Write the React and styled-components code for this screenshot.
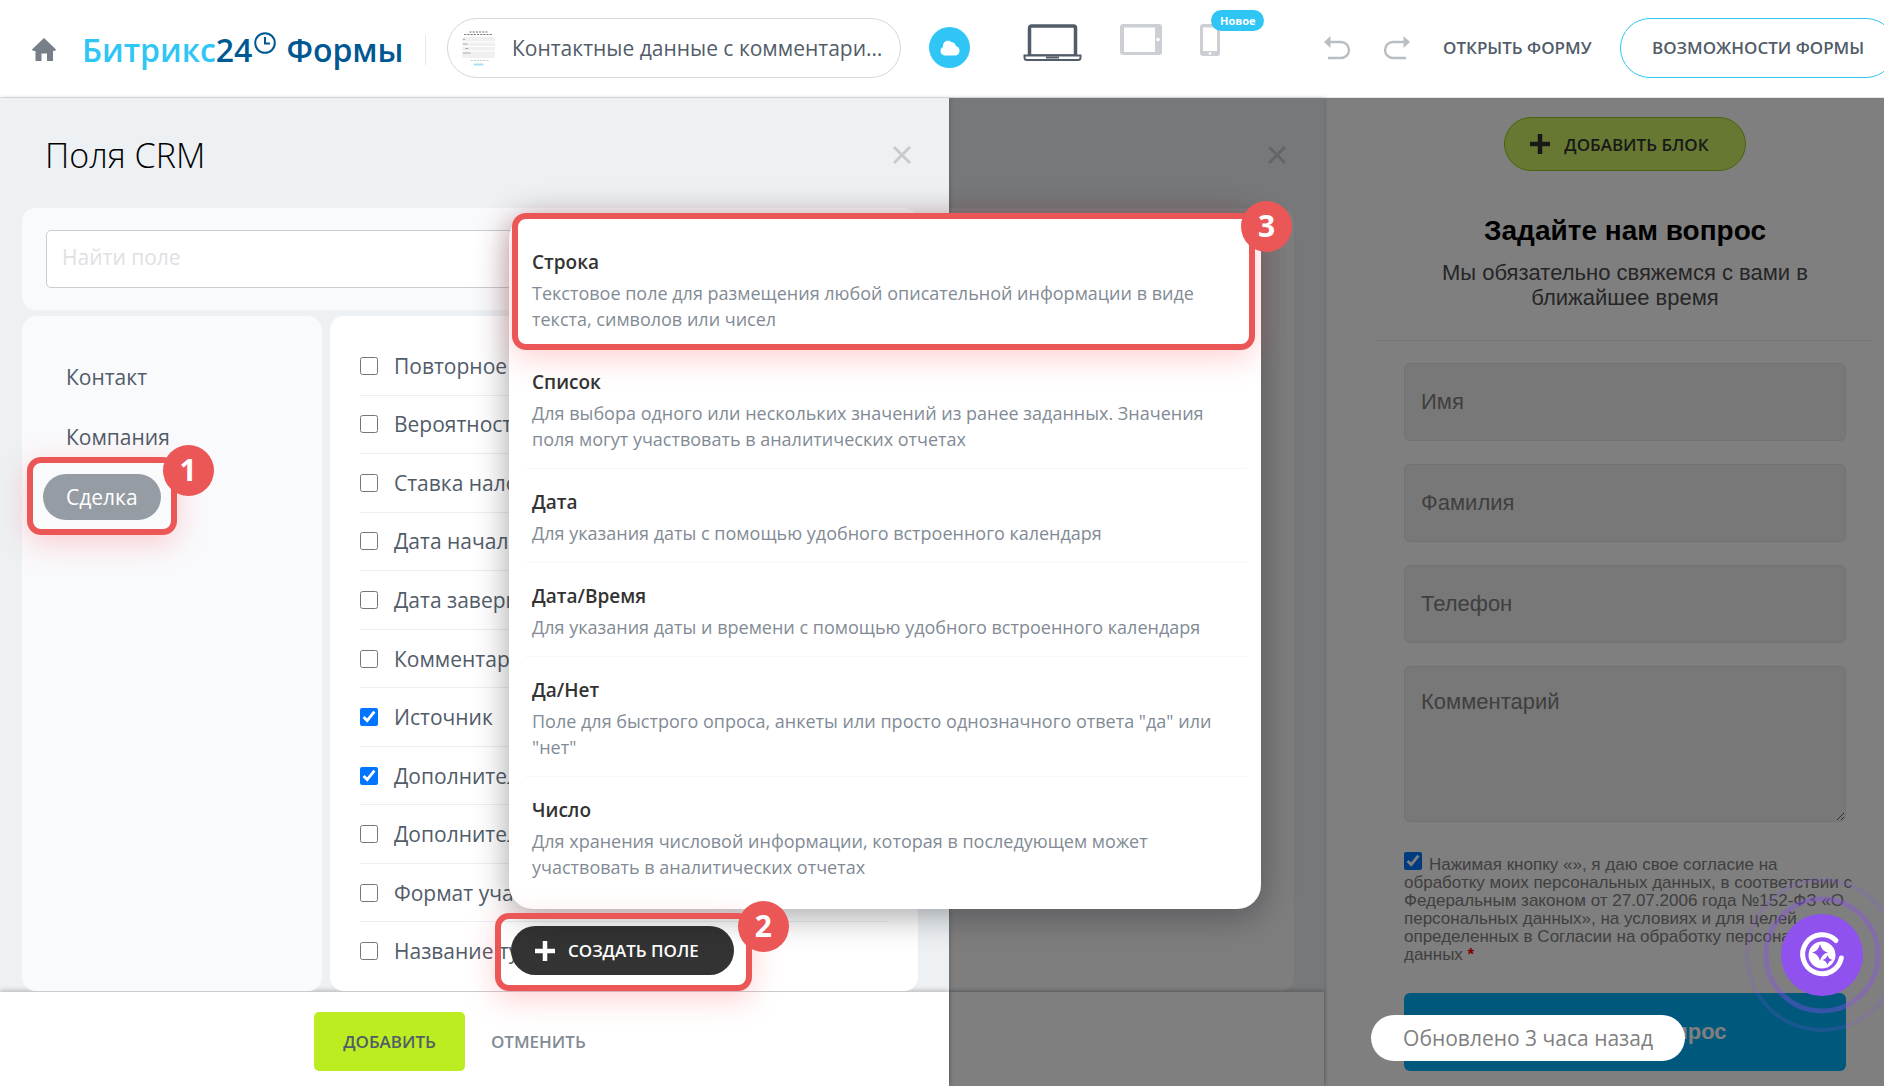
import React, { useState } from 'react'
import styled, { createGlobalStyle } from 'styled-components'

const GlobalStyle = createGlobalStyle`
    * {
        box-sizing: border-box;
    }
    body {
        margin: 0;
        font-family: "Open Sans", "Noto Sans", sans-serif;
        color: #525c69;
    }
    button, input, textarea {
        font-family: inherit;
        margin: 0;
    }
    button {
        border: none;
        background: none;
        padding: 0;
        cursor: pointer;
    }
`
const Page = styled.div`
    min-height: 100vh;
    display: flex;
    flex-direction: column;
    overflow: hidden;
`

/* header */
const Header = styled.header`
    height: 98px;
    flex-shrink: 0;
    display: flex;
    align-items: center;
    padding: 0 0 16px 32px;
    background-color: #fff;
    border-bottom: 1px solid #e4e7ea;
    white-space: nowrap;
    > * {
        flex-shrink: 0;
    }
`
const IconButton = styled.button`
    display: flex;
    position: relative;
`
const HomeButton = styled(IconButton)`
    margin-top: 18px;
`
const Logo = styled.a`
    display: flex;
    align-items: center;
    margin-left: 26px;
    padding-top: 18px;
    width: 343px;
    font-size: 32px;
    line-height: 32px;
    font-weight: 600;
    color: #005893;
    text-decoration: none;
    svg {
        margin: 0 10px 14px 2px;
    }
`
const LogoBrand = styled.span`
    color: #2fc6f6;
`
const Divider = styled.span`
    width: 1px;
    height: 30px;
    margin-top: 18px;
    background-color: #e6e8ea;
`
const FormName = styled.button`
    display: flex;
    align-items: center;
    width: 454px;
    height: 60px;
    margin: 14px 28px 0 21px;
    padding: 0 14px;
    border: 1px solid #d5d7da;
    border-radius: 30px;
    font-size: 21px;
    color: #525c69;
    svg {
        flex-shrink: 0;
        margin-right: 17px;
    }
`
const Ellipsis = styled.span`
    overflow: hidden;
    text-overflow: ellipsis;
`
const CloudButton = styled(IconButton)`
    width: 41px;
    height: 41px;
    margin-top: 14px;
    border-radius: 50%;
    align-items: center;
    justify-content: center;
    background-color: #2fc6f6;
`
const Devices = styled.div`
    display: flex;
    align-items: flex-start;
    gap: 38px;
    margin-left: 53px;
    padding-top: 4px;
`
const NewBadge = styled.span`
    position: absolute;
    left: 11px;
    top: -14px;
    height: 21px;
    padding: 0 9px;
    border-radius: 11px;
    background-color: #2fc6f6;
    color: #fff;
    font-size: 11px;
    line-height: 21px;
    font-weight: 700;
`
const History = styled.div`
    display: flex;
    gap: 32px;
    margin: 14px 33px 0 104px;
`
const OpenLink = styled.a`
    width: 177px;
    margin-top: 14px;
    font-size: 17px;
    font-weight: 600;
    color: #525c69;
    text-decoration: none;
`
const FeaturesButton = styled.button`
    height: 60px;
    margin-top: 14px;
    padding: 0 31px;
    border: 1px solid #2fc6f6;
    border-radius: 30px;
    font-size: 17px;
    font-weight: 600;
    color: #525c69;
`

/* workspace */
const Workspace = styled.main`
    flex: 1;
    display: grid;
    grid-template-columns: 949fr 375fr 560fr;
    position: relative;
`
const Shade = styled.div`
    position: absolute;
    inset: 0;
    z-index: 1;
    background-color: rgba(0, 0, 0, 0.5);
`
const Slider = styled.section`
    display: flex;
    flex-direction: column;
    position: relative;
    z-index: 2;
    background-color: #edf1f4;
    box-shadow: 1px 0 4px rgba(0, 0, 0, 0.2);
`
const SliderHead = styled.div`
    display: flex;
    justify-content: space-between;
    align-items: center;
    height: 110px;
    padding: 4px 37px 0 45px;
`
const SliderTitle = styled.h1`
    margin: 0;
    font-size: 34px;
    font-weight: 300;
    color: #000;
`
const SliderBody = styled.div`
    flex: 1;
    display: flex;
    flex-direction: column;
    gap: 6px;
    padding: 0 31px 1px 22px;
`
const SearchCard = styled.div`
    height: 102px;
    padding: 22px 24px;
    border-radius: 14px;
    background-color: #f9fafc;
`
const SearchInput = styled.input`
    width: 100%;
    height: 58px;
    padding: 0 15px 4px;
    border: 1px solid #c6cdd3;
    border-radius: 5px;
    font-size: 21px;
    outline: none;
    &::placeholder {
        color: #dfe0e3;
    }
`
const Columns = styled.div`
    flex: 1;
    display: flex;
    gap: 8px;
    position: relative;
`
const Menu = styled.nav`
    width: 300px;
    display: flex;
    flex-direction: column;
    align-items: flex-start;
    gap: 14px;
    padding: 38px 21px;
    border-radius: 14px;
    background-color: #f9fafc;
`
const MenuItem = styled.button`
    position: relative;
    height: 46px;
    padding: 0 23px;
    border-radius: 23px;
    font-size: 21px;
    color: ${props => props.$active ? '#fff' : '#525c69'};
    background-color: ${props => props.$active ? '#959ca4' : 'transparent'};
`
const Fields = styled.div`
    flex: 1;
    display: flex;
    flex-direction: column;
    padding: 21px 30px 11px;
    border-radius: 14px;
    background-color: #fff;
`
const Field = styled.label`
    flex: 1;
    display: flex;
    align-items: center;
    gap: 16px;
    border-bottom: 1px solid #edeef0;
    font-size: 21px;
    line-height: 28px;
    white-space: nowrap;
    &:last-child {
        border-bottom: none;
    }
`
const Check = styled.input`
    flex-shrink: 0;
    width: 18px;
    height: 18px;
    accent-color: #0075ff;
`
const Footer = styled.footer`
    display: flex;
    align-items: center;
    justify-content: center;
    height: 94px;
    padding: 4px 23px 0 0;
    background-color: #fff;
    box-shadow: 0 -2px 4px rgba(0, 0, 0, 0.2);
`
const FooterButton = styled.button`
    height: 59px;
    padding: 0 ${props => props.$primary ? '29px' : '26px'};
    border-radius: 5px;
    font-size: 17px;
    font-weight: 600;
    color: ${props => props.$primary ? '#535c69' : '#828b95'};
    background-color: ${props => props.$primary ? '#bbed21' : 'transparent'};
`

/* numbered callouts */
const Highlight = styled.span`
    position: absolute;
    inset: ${props => props.$inset};
    border: 6px solid #eb5757;
    border-radius: 14px;
    box-shadow: 0 8px 30px rgba(255, 70, 80, 0.25);
    pointer-events: none;
`
const Step = styled.span`
    position: absolute;
    top: -18px;
    right: -43px;
    width: 51px;
    height: 51px;
    border-radius: 50%;
    background-color: #eb5757;
    color: #fff;
    font-size: 30px;
    line-height: 50px;
    font-weight: 700;
    text-align: center;
`

/* create field */
const CreateBox = styled.div`
    position: absolute;
    left: 489px;
    bottom: 16px;
`
const CreateButton = styled.button`
    display: flex;
    align-items: center;
    gap: 13px;
    height: 49px;
    padding: 0 35px 0 24px;
    border-radius: 25px;
    background-color: #333;
    color: #fff;
    font-size: 17px;
    font-weight: 600;
    white-space: nowrap;
`
const Popup = styled.div`
    position: absolute;
    left: -2px;
    bottom: 66px;
    width: 752px;
    padding: 15px 14px 13px 16px;
    border-radius: 24px;
    background-color: #fff;
    box-shadow: 0 7px 21px rgba(83, 92, 105, 0.12), 0 6px 36px rgba(0, 0, 0, 0.3);
`
const TypeItem = styled.button`
    display: block;
    position: relative;
    width: 100%;
    padding: 19px 7px 16px;
    border-bottom: 1px solid #f7f8f8;
    text-align: left;
    &:last-of-type {
        border-bottom: none;
    }
`
const TypeTitle = styled.span`
    display: block;
    margin-bottom: 4px;
    font-size: 19px;
    line-height: 28px;
    font-weight: 600;
    color: #333;
`
const TypeText = styled.span`
    display: block;
    font-size: 18px;
    line-height: 26px;
    color: #828b95;
`

/* panel under the shade */
const BackPanel = styled.section`
    display: flex;
    flex-direction: column;
    position: relative;
    background-color: #eef0f4;
    box-shadow: 1px 0 4px rgba(0, 0, 0, 0.2);
`
const BackCard = styled.div`
    flex: 1;
    margin: 0 30px 1px 0;
    border-radius: 0 14px 14px 0;
    background-color: #fdfdfe;
`

/* form preview */
const Preview = styled.section`
    display: flex;
    flex-direction: column;
    align-items: stretch;
    padding: 19px 11px 14px 53px;
    background-color: #fff;
    font-family: "Liberation Sans", Arial, sans-serif;
`
const AddBlock = styled.button`
    align-self: center;
    display: flex;
    align-items: center;
    gap: 14px;
    height: 54px;
    padding: 0 36px 0 25px;
    border: 1px solid #94c820;
    border-radius: 27px;
    background-color: #ccf062;
    color: #333;
    font-family: "Open Sans", "Noto Sans", sans-serif;
    font-size: 17px;
    font-weight: 600;
`
const FormHead = styled.div`
    padding: 44px 25px 30px;
    border-bottom: 1px solid #e8eaec;
    text-align: center;
`
const FormTitle = styled.h2`
    margin: 0 0 13px;
    font-size: 28px;
    line-height: 32px;
    color: #000;
`
const FormText = styled.p`
    margin: 0;
    padding: 0 25px;
    font-size: 22px;
    line-height: 25px;
    color: #4c4c4c;
`
const Form = styled.form`
    display: flex;
    flex-direction: column;
    gap: 23px;
    padding: 22px 27px 0;
`
const Input = styled.input`
    height: 78px;
    padding: 0 16px;
    border: 1px solid #e4e4e4;
    border-radius: 6px;
    background-color: #f0f0f0;
    font-size: 22px;
    &::placeholder {
        color: #7f7f7f;
    }
`
const TextArea = styled(Input).attrs({ as: 'textarea' })`
    height: 156px;
    padding: 22px 16px;
`
const Consent = styled.label`
    margin-right: -14px;
    padding-top: 7px;
    font-size: 17px;
    line-height: 18px;
    color: #808080;
    input {
        margin-right: 7px;
    }
`
const Required = styled.b`
    color: #f00;
`
const Submit = styled.button`
    height: 78px;
    margin-top: 6px;
    border-radius: 6px;
    background-color: #00b0f8;
    color: #fff;
    font-size: 22px;
    font-weight: 700;
`
const Toast = styled.div`
    position: absolute;
    z-index: 3;
    right: 199px;
    bottom: 25px;
    padding: 0 32px;
    border-radius: 23px;
    background-color: #fff;
    color: #808080;
    font-size: 21px;
    line-height: 46px;
`
const Assistant = styled(IconButton)`
    position: absolute;
    z-index: 3;
    right: -16px;
    bottom: 53px;
`

const HomeIcon = () => (
    <svg width="24" height="23" viewBox="0 0 24 23" fill="#777f89">
        <path d="M12 0 24 11.5q-.6 1.4-2 1.4h-1V23h-6v-7.500H9.500V23H3.500V12.900H2q-1.500 0-2-1.400Z" />
    </svg>
)
const ClockIcon = () => (
    <svg width="22" height="22" viewBox="0 0 22 22" fill="none" stroke="#005893" strokeWidth="2">
        <circle cx="11" cy="11" r="9.800" />
        <path d="M11 5v6.500h5" />
    </svg>
)
const ThumbIcon = () => (
    <svg width="33" height="36" viewBox="0 0 31 36" preserveAspectRatio="none">
        <path d="M7 2h17M2 4.500h27" stroke="#777" strokeDasharray="2 1" />
        <rect y="7" width="31" height="21" rx="2" fill="#f0f0f0" />
        <path d="M0 12h31M0 16.500h31M0 21h31" stroke="#fff" />
        <path d="M1 9.500h2M1 14h4M3 18.500h3M1 23h7" stroke="#aaa" />
        <path d="M8 30.500h18" stroke="#ccc" strokeDasharray="2 1" />
        <path d="M11 34.500h9" stroke="#a8def5" strokeWidth="2" />
    </svg>
)
const CloudIcon = () => (
    <svg width="20" height="16" viewBox="0 0 20 16" fill="#fff">
        <path d="M4.500 15.500a4.500 4.500 0 0 1-1.500-8.500C2.500 3.500 5 .8 8 .8c1.500 0 2.500.5 3.500 1.500 2.500 0 4.300 1.700 4.500 4a4.700 4.700 0 0 1-.5 9.200Z" />
    </svg>
)
const LaptopIcon = () => (
    <svg width="59" height="38" viewBox="0 0 59 38">
        <rect x="6.500" y="2" width="46" height="30" rx="2" fill="none" stroke="#525c69" strokeWidth="3.500" />
        <path d="M1.500 31.500h56v2q0 2.500-2.500 2.500H4q-2.500 0-2.500-2.500Z" fill="#fff" stroke="#525c69" strokeWidth="2" />
        <path d="M23 33.500h13" stroke="#525c69" strokeWidth="2" />
    </svg>
)
const TabletIcon = () => (
    <svg width="42" height="31" viewBox="0 0 42 31">
        <path fillRule="evenodd" d="M3 0h36q3 0 3 3v25q0 3-3 3H3q-3 0-3-3V3q0-3 3-3Zm1 3.500v24.500h31V3.500Z" fill="#ccd0d4" />
        <circle cx="38" cy="15.500" r="1.800" fill="#fff" />
    </svg>
)
const PhoneIcon = () => (
    <svg width="20" height="32" viewBox="0 0 20 32">
        <path fillRule="evenodd" d="M3 0h14q3 0 3 3v26q0 3-3 3H3q-3 0-3-3V3q0-3 3-3Zm0 3.500v23.500h14V3.500Z" fill="#ccd0d4" />
        <circle cx="10" cy="29.500" r="1.300" fill="#fff" />
    </svg>
)
const UndoIcon = ({ flip }) => (
    <svg width="27" height="24" viewBox="0 0 27 24" transform={flip ? 'scale(-1 1)' : undefined}>
        <path d="M4 6h13a8 8 0 0 1 0 16H4" fill="none" stroke="#b9bec4" strokeWidth="2.400" />
        <path d="M0 6 6.500 0v12Z" fill="#b9bec4" />
    </svg>
)
const CloseIcon = () => (
    <svg width="20" height="20" viewBox="0 0 20 20" stroke="#c8cbce" strokeWidth="3">
        <path d="m2 2 16 16M18 2 2 18" />
    </svg>
)
const PlusIcon = ({ color }) => (
    <svg width="20" height="20" viewBox="0 0 20 20" stroke={color} strokeWidth="4.500">
        <path d="M10 0v20M0 10h20" />
    </svg>
)
const AssistantIcon = () => (
    <svg width="156" height="156" viewBox="0 0 156 156" fill="none">
        <circle cx="78" cy="78" r="75" stroke="#8b52ee" strokeOpacity=".18" strokeWidth="4" />
        <circle cx="78" cy="78" r="56" stroke="#8b52ee" strokeOpacity=".38" strokeWidth="5" />
        <circle cx="78" cy="78" r="41" fill="#8f52ee" />
        <path d="M92 63.500A19.500 19.500 0 1 0 97.300 81" stroke="#fff" strokeWidth="5" strokeLinecap="round" />
        <circle cx="78" cy="78" r="13.500" fill="#fff" />
        <path d="M76 67q1.500 7 8 8.500-6.500 1.500-8 8.500-1.500-7-8-8.500 6.500-1.500 8-8.500Z" fill="#8f52ee" />
        <path d="M83.500 78q1 4 5 5-4 1-5 5-1-4-5-5 4-1 5-5Z" fill="#8f52ee" />
    </svg>
)

const menuItems = ['Контакт', 'Компания', 'Сделка']

const fieldItems = [
    { id: 1, name: 'Повторное' },
    { id: 2, name: 'Вероятность' },
    { id: 3, name: 'Ставка налога' },
    { id: 4, name: 'Дата начала' },
    { id: 5, name: 'Дата завершения' },
    { id: 6, name: 'Комментарий' },
    { id: 7, name: 'Источник', checked: true },
    { id: 8, name: 'Дополнительно', checked: true },
    { id: 9, name: 'Дополнительно' },
    { id: 10, name: 'Формат участия' },
    { id: 11, name: 'Название тура' },
]

const typeItems = [
    { title: 'Строка', text: 'Текстовое поле для размещения любой описательной информации в виде текста, символов или чисел', step: 3 },
    { title: 'Список', text: 'Для выбора одного или нескольких значений из ранее заданных. Значения поля могут участвовать в аналитических отчетах' },
    { title: 'Дата', text: 'Для указания даты с помощью удобного встроенного календаря' },
    { title: 'Дата/Время', text: 'Для указания даты и времени с помощью удобного встроенного календаря' },
    { title: 'Да/Нет', text: 'Поле для быстрого опроса, анкеты или просто однозначного ответа "да" или "нет"' },
    { title: 'Число', text: 'Для хранения числовой информации, которая в последующем может участвовать в аналитических отчетах' },
]

const TopBar = () => (
    <Header>
        <HomeButton aria-label="Главная"><HomeIcon /></HomeButton>
        <Logo href="#">
            <LogoBrand>Битрикс</LogoBrand>24<ClockIcon />Формы
        </Logo>
        <Divider />
        <FormName>
            <ThumbIcon />
            <Ellipsis>Контактные данные с комментарием</Ellipsis>
        </FormName>
        <CloudButton aria-label="Облако"><CloudIcon /></CloudButton>
        <Devices>
            <IconButton aria-label="Компьютер"><LaptopIcon /></IconButton>
            <IconButton aria-label="Планшет"><TabletIcon /></IconButton>
            <IconButton aria-label="Телефон">
                <PhoneIcon />
                <NewBadge>Новое</NewBadge>
            </IconButton>
        </Devices>
        <History>
            <IconButton aria-label="Отменить действие"><UndoIcon /></IconButton>
            <IconButton aria-label="Повторить действие"><UndoIcon flip /></IconButton>
        </History>
        <OpenLink href="#">ОТКРЫТЬ ФОРМУ</OpenLink>
        <FeaturesButton>ВОЗМОЖНОСТИ ФОРМЫ</FeaturesButton>
    </Header>
)

const CreateField = () => (
    <CreateBox>
        <CreateButton>
            <PlusIcon color="#fff" />
            СОЗДАТЬ ПОЛЕ
        </CreateButton>
        <Popup>
            {typeItems.map(item => (
                <TypeItem key={item.title}>
                    <TypeTitle>{item.title}</TypeTitle>
                    <TypeText>{item.text}</TypeText>
                    {item.step && (
                        <Highlight $inset="-16px -8px -2px -13px">
                            <Step>{item.step}</Step>
                        </Highlight>
                    )}
                </TypeItem>
            ))}
        </Popup>
        <Highlight $inset="-13px -18px -16px -16px">
            <Step>2</Step>
        </Highlight>
    </CreateBox>
)

const CrmFields = () => {
    const [active, setActive] = useState('Сделка')
    return (
        <Slider>
            <SliderHead>
                <SliderTitle>Поля CRM</SliderTitle>
                <IconButton aria-label="Закрыть"><CloseIcon /></IconButton>
            </SliderHead>
            <SliderBody>
                <SearchCard>
                    <SearchInput type="text" placeholder="Найти поле" aria-label="Найти поле" />
                </SearchCard>
                <Columns>
                    <Menu>
                        {menuItems.map(item => (
                            <MenuItem key={item} $active={item === active} onClick={() => setActive(item)}>
                                {item}
                                {item === active && (
                                    <Highlight $inset="-17px -16px -15px">
                                        <Step>1</Step>
                                    </Highlight>
                                )}
                            </MenuItem>
                        ))}
                    </Menu>
                    <Fields>
                        {fieldItems.map(item => (
                            <Field key={item.id}>
                                <Check type="checkbox" defaultChecked={item.checked} />
                                {item.name}
                            </Field>
                        ))}
                    </Fields>
                    <CreateField />
                </Columns>
            </SliderBody>
            <Footer>
                <FooterButton $primary>ДОБАВИТЬ</FooterButton>
                <FooterButton>ОТМЕНИТЬ</FooterButton>
            </Footer>
        </Slider>
    )
}

const FormPreview = () => (
    <Preview>
        <AddBlock>
            <PlusIcon color="#333" />
            ДОБАВИТЬ БЛОК
        </AddBlock>
        <FormHead>
            <FormTitle>Задайте нам вопрос</FormTitle>
            <FormText>Мы обязательно свяжемся с вами в ближайшее время</FormText>
        </FormHead>
        <Form onSubmit={(e) => e.preventDefault()}>
            <Input type="text" placeholder="Имя" aria-label="Имя" />
            <Input type="text" placeholder="Фамилия" aria-label="Фамилия" />
            <Input type="tel" placeholder="Телефон" aria-label="Телефон" />
            <TextArea placeholder="Комментарий" aria-label="Комментарий" />
            <Consent>
                <Check type="checkbox" defaultChecked />
                Нажимая кнопку «», я даю свое согласие на обработку моих персональных данных, в соответствии с
                Федеральным законом от 27.07.2006 года №152-ФЗ «О персональных данных», на условиях и для целей,
                определенных в Согласии на обработку персональных данных <Required>*</Required>
            </Consent>
            <Submit>Отправить вопрос</Submit>
        </Form>
    </Preview>
)

const App = () => {
    return (
        <Page>
            <GlobalStyle />
            <TopBar />
            <Workspace>
                <CrmFields />
                <BackPanel>
                    <SliderHead>
                        <span />
                        <IconButton aria-label="Закрыть панель"><CloseIcon /></IconButton>
                    </SliderHead>
                    <BackCard />
                    <Footer />
                </BackPanel>
                <FormPreview />
                <Shade />
                <Toast>Обновлено 3 часа назад</Toast>
                <Assistant aria-label="Помощник"><AssistantIcon /></Assistant>
            </Workspace>
        </Page>
    )
}

export default App
